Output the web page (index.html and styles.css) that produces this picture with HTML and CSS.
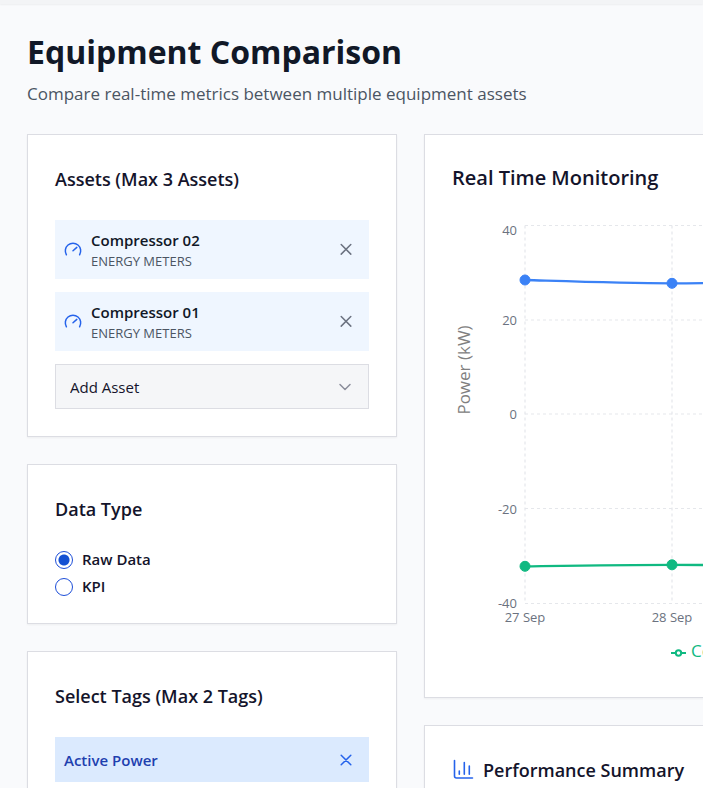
FILE: index.html
```html
<!DOCTYPE html>
<html lang="en">
<head>
    <meta charset="UTF-8">
    <meta name="viewport" content="width=device-width, initial-scale=1.0">
    <title>Equipment Comparison</title>
    <link rel="stylesheet" href="styles.css">
</head>
<body>
    <div class="top-bar"></div>

    <div class="page-container">
        <header class="page-header">
            <h1>Equipment Comparison</h1>
            <p>Compare real-time metrics between multiple equipment assets</p>
        </header>

        <div class="layout">
            <aside class="column">
                <section class="card">
                    <h2>Assets (Max 3 Assets)</h2>
                    <div class="asset-list">
                        <div class="asset">
                            <svg class="gauge-icon" viewBox="0 0 18 18" aria-hidden="true">
                                <path d="M2.4 13.8a7.7 7.7 0 1 1 13.2 0M9 9.8l3.8-3.4"/>
                            </svg>
                            <div class="asset-info">
                                <div class="asset-name">Compressor 02</div>
                                <div class="asset-type">ENERGY METERS</div>
                            </div>
                            <button class="remove-btn" type="button" aria-label="Remove Compressor 02">
                                <svg viewBox="0 0 18 18" aria-hidden="true"><path d="M4.2 3.5l9.6 9.6M13.8 3.5l-9.6 9.6"/></svg>
                            </button>
                        </div>
                        <div class="asset">
                            <svg class="gauge-icon" viewBox="0 0 18 18" aria-hidden="true">
                                <path d="M2.4 13.8a7.7 7.7 0 1 1 13.2 0M9 9.8l3.8-3.4"/>
                            </svg>
                            <div class="asset-info">
                                <div class="asset-name">Compressor 01</div>
                                <div class="asset-type">ENERGY METERS</div>
                            </div>
                            <button class="remove-btn" type="button" aria-label="Remove Compressor 01">
                                <svg viewBox="0 0 18 18" aria-hidden="true"><path d="M4.2 3.5l9.6 9.6M13.8 3.5l-9.6 9.6"/></svg>
                            </button>
                        </div>
                        <div class="select-box">
                            <select aria-label="Add Asset">
                                <option>Add Asset</option>
                            </select>
                            <svg class="chevron" viewBox="0 0 18 18" aria-hidden="true"><path d="M4 6.5l5 5 5-5"/></svg>
                        </div>
                    </div>
                </section>

                <section class="card">
                    <h2>Data Type</h2>
                    <div class="radio-list">
                        <label><input type="radio" name="dataType" checked> Raw Data</label>
                        <label><input type="radio" name="dataType"> KPI</label>
                    </div>
                </section>

                <section class="card">
                    <h2>Select Tags (Max 2 Tags)</h2>
                    <div class="tag">
                        <span>Active Power</span>
                        <button class="remove-btn" type="button" aria-label="Remove Active Power">
                            <svg viewBox="0 0 18 18" aria-hidden="true"><path d="M4.2 4.2l9.6 9.6M13.8 4.2l-9.6 9.6"/></svg>
                        </button>
                    </div>
                </section>
            </aside>

            <main class="column">
                <section class="card">
                    <h2 class="chart-title">Real Time Monitoring</h2>
                    <svg class="chart" viewBox="0 0 711 448" role="img" aria-label="Power (kW) by day">
                        <g class="grid-lines">
                            <path d="M73 3.5H661M73 98H661M73 192H661M73 286.5H661M73 381.5H661"/>
                            <path d="M73 3.5V381M220 3.5V381M367 3.5V381M514 3.5V381M661 3.5V381"/>
                        </g>
                        <g class="tick end">
                            <text x="65" y="13">40</text>
                            <text x="65" y="103">20</text>
                            <text x="65" y="197">0</text>
                            <text x="65" y="292">-20</text>
                            <text x="65" y="386">-40</text>
                        </g>
                        <g class="tick middle">
                            <text x="73" y="400">27 Sep</text>
                            <text x="220" y="400">28 Sep</text>
                            <text x="367" y="400">29 Sep</text>
                            <text x="514" y="400">30 Sep</text>
                            <text x="661" y="400">01 Oct</text>
                        </g>
                        <text class="axis-label" transform="translate(18 148) rotate(-90)">Power (kW)</text>
                        <!-- Compressor 02 -->
                        <g class="series blue">
                            <path d="M73 58C122 59.5 171 61.3 220 61.3S318 60 367 59S465 60 514 60S612 59 661 58"/>
                            <circle cx="73" cy="58" r="5"/>
                            <circle cx="220" cy="61.3" r="5"/>
                            <circle cx="367" cy="59" r="5"/>
                            <circle cx="514" cy="60" r="5"/>
                            <circle cx="661" cy="58" r="5"/>
                        </g>
                        <!-- Compressor 01 -->
                        <g class="series green">
                            <path d="M73 344.3C122 343.6 171 342.8 220 342.8S318 344 367 345S465 344 514 344S612 344 661 345"/>
                            <circle cx="73" cy="344.3" r="5"/>
                            <circle cx="220" cy="342.8" r="5"/>
                            <circle cx="367" cy="345" r="5"/>
                            <circle cx="514" cy="344" r="5"/>
                            <circle cx="661" cy="345" r="5"/>
                        </g>
                        <g class="legend green">
                            <path d="M219 431h5M229 431h5"/>
                            <circle cx="226.5" cy="431" r="2.7"/>
                            <text x="239" y="435">Compressor 01</text>
                        </g>
                        <g class="legend blue">
                            <path d="M379 431h5M389 431h5"/>
                            <circle cx="386.5" cy="431" r="2.7"/>
                            <text x="399" y="435">Compressor 02</text>
                        </g>
                    </svg>
                </section>

                <section class="card">
                    <div class="summary-title">
                        <svg class="bars-icon" viewBox="0 0 22 22" aria-hidden="true">
                            <path d="M2.5 1.5V17q0 2 2 2h16M7.3 12v3.2M12.3 3.5v11.7M17.3 7v8.2"/>
                        </svg>
                        <h2>Performance Summary</h2>
                    </div>
                </section>
            </main>
        </div>
    </div>
</body>
</html>
```
FILE: styles.css
```css
* {
    box-sizing: border-box;
    margin: 0;
    padding: 0;
}

body {
    font-family: "Open Sans", "Noto Sans", sans-serif;
    font-size: 15px;
    color: #111827;
    background-color: #f9fafc;
    overflow-x: hidden;
}

.top-bar {
    height: 4px;
    background-color: #f3f4f6;
    box-shadow: 0 1px 2px rgba(0,0,0,0.05);
}

.page-container {
    padding: 28px 27px;
}

.page-header {
    margin-bottom: 27px;
}

.page-header h1 {
    font-size: 32px;
    line-height: 40px;
}

.page-header p {
    margin-top: 8px;
    font-size: 17px;
    line-height: 27px;
    color: #4b5563;
}

.layout {
    display: grid;
    grid-template-columns: minmax(370px, 1fr) minmax(767px, 2fr);
    align-items: start;
    gap: 27px;
}

.column {
    display: flex;
    flex-direction: column;
    gap: 27px;
}

.card {
    background-color: white;
    border: 1px solid #dcdde3;
    padding: 27px;
    box-shadow: 0 1px 2px rgba(0,0,0,0.05);
}

h2 {
    font-size: 18px;
    font-weight: 600;
    line-height: 34px;
    margin-bottom: 24px;
    color: #14142b;
}

/* Assets */
.asset-list {
    display: flex;
    flex-direction: column;
    gap: 13px;
}

.asset {
    display: flex;
    align-items: center;
    gap: 9px;
    padding: 8px 9px;
    background-color: #eff6ff;
}

.asset-info {
    flex: 1;
}

.asset-name {
    font-weight: 600;
    line-height: 24px;
}

.asset-type {
    font-size: 13px;
    line-height: 19px;
    color: #4b5563;
}

.gauge-icon,
.remove-btn svg,
.chevron {
    display: block;
    width: 18px;
    height: 18px;
    fill: none;
    stroke: currentColor;
    stroke-width: 1.5;
    stroke-linecap: round;
    stroke-linejoin: round;
}

.gauge-icon {
    color: #2563eb;
}

.remove-btn {
    padding: 5px;
    border: none;
    background: none;
    color: #6b7280;
    cursor: pointer;
}

.select-box {
    position: relative;
    color: #8b8e9b;
}

.select-box select {
    display: block;
    width: 100%;
    height: 45px;
    padding: 0 14px;
    appearance: none;
    font: inherit;
    color: #14142b;
    background-color: #f5f6f8;
    border: 1px solid #dcdde3;
    border-radius: 0;
}

.chevron {
    position: absolute;
    right: 15px;
    top: 14px;
    pointer-events: none;
}

/* Data type */
.radio-list {
    display: flex;
    flex-direction: column;
    gap: 8px;
}

.radio-list label {
    display: flex;
    align-items: center;
    gap: 9px;
    font-weight: 600;
    line-height: 19px;
    color: #14142b;
}

.radio-list input {
    appearance: none;
    width: 18px;
    height: 18px;
    border: 1px solid #1d4ed8;
    border-radius: 50%;
}

.radio-list input:checked {
    background: radial-gradient(circle, #1450d2 5px, transparent 6px);
}

/* Tags */
.tag {
    display: flex;
    align-items: center;
    justify-content: space-between;
    height: 45px;
    padding: 0 9px;
    font-weight: 600;
    color: #1e40af;
    background-color: #dbeafe;
}

.tag .remove-btn {
    color: #2563eb;
}

/* Chart */
.chart-title {
    font-size: 20px;
    line-height: 32px;
    margin-bottom: 28px;
}

.chart {
    display: block;
    width: 100%;
}

.grid-lines {
    fill: none;
    stroke: #e5e7eb;
    stroke-width: 1.2;
    stroke-dasharray: 3 3;
}

.tick {
    font-size: 13px;
    fill: #6b7280;
}

.end {
    text-anchor: end;
}

.middle,
.axis-label {
    text-anchor: middle;
}

.axis-label {
    font-size: 17px;
    fill: #808080;
}

.blue {
    color: #3b82f6;
}

.green {
    color: #10b981;
}

.series path,
.legend path,
.legend circle {
    fill: none;
    stroke: currentColor;
    stroke-width: 2;
}

.series path {
    stroke-width: 2.3;
}

.series circle {
    fill: currentColor;
    stroke: currentColor;
}

.legend text {
    font-size: 17px;
    fill: currentColor;
}

/* Performance summary */
.summary-title {
    display: flex;
    align-items: center;
    gap: 9px;
}

.summary-title h2 {
    margin-bottom: 0;
}

.bars-icon {
    width: 22px;
    height: 22px;
    fill: none;
    stroke: #2563eb;
    stroke-width: 1.6;
    stroke-linecap: round;
}
```
